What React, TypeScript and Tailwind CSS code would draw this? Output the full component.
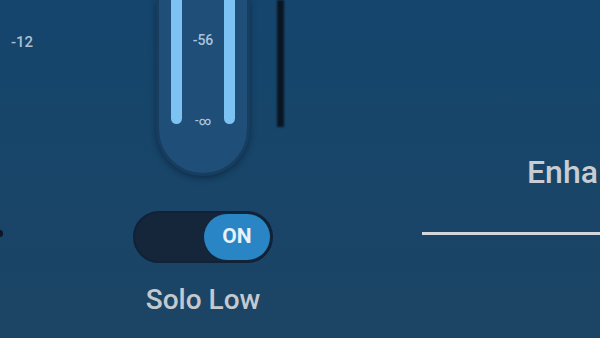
const Meter = () => {
  return (
    <div className="relative w-[94px] h-[176px] rounded-b-[47px] bg-[#173d5f] p-[3px] pt-0 shadow-[0_2px_6px_rgba(5,20,40,0.5)]">
      <div className="flex h-full w-full justify-center gap-[6px] rounded-b-[44px] bg-[#1f4e78]">
        <div className="h-[124px] w-[11px] rounded-b-[6px] bg-[#7cc2f2]" />
        <div className="flex h-[130px] w-[30px] flex-col items-center justify-between pt-[30px] text-[14px] font-medium text-[#a9c3da]">
          <span>-56</span>
          <span className="text-[12px]">-∞</span>
        </div>
        <div className="h-[124px] w-[11px] rounded-b-[6px] bg-[#7cc2f2]" />
      </div>
    </div>
  );
};

export default function App() {
  return (
    <div
      className="flex h-[338px] w-[600px] overflow-hidden bg-gradient-to-b from-[#15456d] via-[#184569] to-[#1c4464] text-[#c9ced6]"
      style={{ fontFamily: 'Roboto, "Liberation Sans", sans-serif' }}
    >
      <div className="relative w-[133px] shrink-0">
        <div className="pl-[11px] pt-[31px] text-[15px] font-medium text-[#aebfd0]">-12</div>
        <div className="absolute left-0 top-[230px] h-[7px] w-[3px] rounded-r bg-[#0b1726]" />
      </div>

      <div className="flex w-[140px] shrink-0 flex-col items-center">
        <Meter />
        <div className="mt-[35px] flex h-[52px] w-[140px] items-center justify-end rounded-full border-[2px] border-[#0f2237] bg-[#15263a] p-[1px]">
          <div className="flex h-[46px] w-[66px] items-center justify-center rounded-full bg-[#2a85c5] text-[21px] font-bold text-[#e6f1fa]">
            ON
          </div>
        </div>
        <div className="mt-[16px] whitespace-nowrap text-[28px] font-medium text-[#c4c9d0]">
          Solo Low
        </div>
      </div>

      <div className="ml-[4px] h-[127px] w-[7px] shrink-0 bg-[#0a1522] blur-[1px]" />

      <div className="flex flex-1 flex-col pt-[150px]">
        <div className="whitespace-nowrap pl-[243px] text-[32px] font-medium leading-[44px] text-[#c8cdd4]">
          Enha
        </div>
        <div className="ml-[138px] mt-[38px] h-[3px] bg-[#d3d7dc]" />
      </div>
    </div>
  );
}
